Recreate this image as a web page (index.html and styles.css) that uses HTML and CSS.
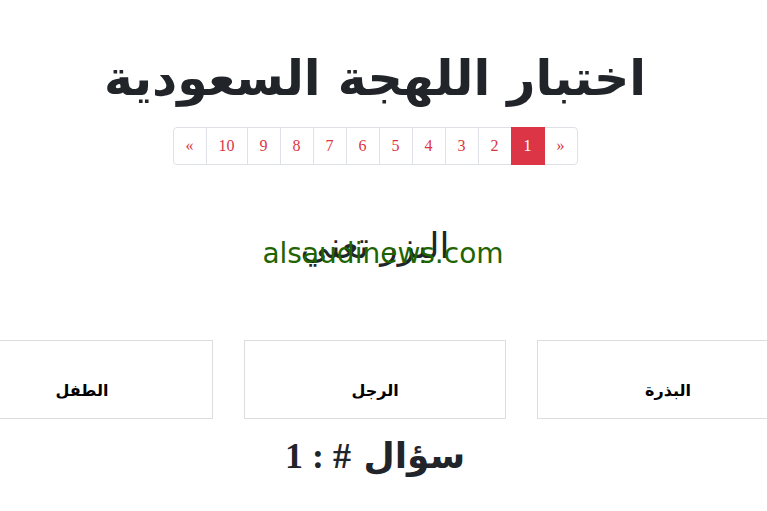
FILE: index.html
```html
<!DOCTYPE html>
<html lang="ar" dir="rtl">
<head>
<meta charset="utf-8">
<link rel="stylesheet" href="styles.css">
</head>
<body>
<div class="page">
  <h1 class="title">اختبار اللهجة السعودية</h1>
  <nav class="pager">
    <a class="pg">«</a>
    <a class="pg active">1</a>
    <a class="pg">2</a>
    <a class="pg">3</a>
    <a class="pg">4</a>
    <a class="pg">5</a>
    <a class="pg">6</a>
    <a class="pg">7</a>
    <a class="pg">8</a>
    <a class="pg">9</a>
    <a class="pg">10</a>
    <a class="pg">»</a>
  </nav>
  <div class="prompt">
    <h2 class="word">البزر تعني</h2>
    <span class="mark" dir="ltr">alsaudinews.com</span>
  </div>
  <div class="answers">
    <div class="card">البذرة</div>
    <div class="card">الرجل</div>
    <div class="card">الطفل</div>
  </div>
  <h3 class="question"><span class="q-ar">سؤال</span> <span class="q-num" dir="ltr">1 : #</span></h3>
</div>
</body>
</html>
```

FILE: styles.css
```css
html, body {
  margin: 0;
  padding: 0;
  background: #fff;
  overflow: hidden;
}
body {
  font-family: "DejaVu Sans", sans-serif;
  color: #212529;
}
.page {
  width: 750px;
  margin: 0 auto 0 0;
  display: flex;
  flex-direction: column;
  align-items: center;
}
.title {
  margin: 44px 0 0;
  font-size: 49px;
  font-weight: bold;
  line-height: 70px;
  color: #212529;
}
.pager {
  display: flex;
  direction: rtl;
  margin-top: 13px;
  border-radius: 4px;
}
.pg {
  font-family: "Liberation Serif", serif;
  font-size: 16px;
  line-height: 20px;
  padding: 8px 12px;
  color: #dc3545;
  border: 1px solid #dee2e6;
  margin-right: -1px;
  background: #fff;
}
.pg:first-child {
  border-radius: 0 4px 4px 0;
  margin-right: 0;
}
.pg:last-child {
  border-radius: 4px 0 0 4px;
}
.pg.active {
  background: #dc3545;
  border-color: #dc3545;
  color: #fff;
  position: relative;
  z-index: 1;
}
.prompt {
  position: relative;
  margin-top: 60px;
  display: flex;
  justify-content: center;
}
.word {
  margin: 0;
  font-size: 36px;
  font-weight: normal;
  line-height: 42px;
}
.mark {
  position: absolute;
  left: calc(50% + 8px);
  top: 12px;
  transform: translateX(-50%);
  font-family: "Comic Sans MS", "DejaVu Sans", sans-serif;
  font-size: 28px;
  color: #1e6400;
  white-space: nowrap;
}
.answers {
  display: flex;
  gap: 31px;
  margin-top: 73px;
  width: 848px;
  justify-content: center;
}
.card {
  flex: 0 0 262px;
  box-sizing: border-box;
  height: 79px;
  border: 1px solid #dddddd;
  display: flex;
  justify-content: center;
  align-items: flex-end;
  padding-bottom: 18px;
  font-size: 16px;
  font-weight: bold;
  color: #000;
}
.question {
  margin: 15px 0 0;
  font-size: 36px;
  font-weight: bold;
  line-height: 44px;
}
.q-num {
  font-family: "Liberation Serif", serif;
}
```
